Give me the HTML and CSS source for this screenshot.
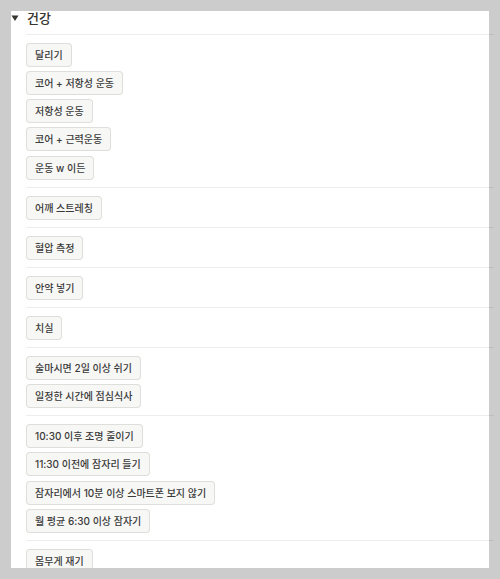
FILE: index.html
```html
<!DOCTYPE html>
<html lang="ko">
<head>
  <meta charset="utf-8">
  <title>건강</title>
  <link rel="stylesheet" href="styles.css">
</head>
<body>
  <div class="panel">
    <div class="toggle-head">
      <span class="toggle-icon">
        <svg width="8" height="8" viewBox="0 0 8 8"><polygon points="0.5,1.5 7.5,1.5 4,7" fill="#37352f"/></svg>
      </span>
      <span class="toggle-title">건강</span>
    </div>

    <div class="groups">
      <div class="group">
        <button class="habit">달리기</button>
        <button class="habit">코어 + 저항성 운동</button>
        <button class="habit">저항성 운동</button>
        <button class="habit">코어 + 근력운동</button>
        <button class="habit">운동 w 이든</button>
      </div>
      <div class="group">
        <button class="habit">어깨 스트레칭</button>
      </div>
      <div class="group">
        <button class="habit">혈압 측정</button>
      </div>
      <div class="group">
        <button class="habit">안약 넣기</button>
      </div>
      <div class="group">
        <button class="habit">치실</button>
      </div>
      <div class="group">
        <button class="habit">술마시면 2일 이상 쉬기</button>
        <button class="habit">일정한 시간에 점심식사</button>
      </div>
      <div class="group">
        <button class="habit">10:30 이후 조명 줄이기</button>
        <button class="habit">11:30 이전에 잠자리 들기</button>
        <button class="habit">잠자리에서 10분 이상 스마트폰 보지 않기</button>
        <button class="habit">월 평균 6:30 이상 잠자기</button>
      </div>
      <div class="group">
        <button class="habit">몸무게 재기</button>
      </div>
    </div>
  </div>
</body>
</html>
```

FILE: styles.css
```css
body {
  margin: 0;
  background-color: #cccccc;
  font-family: "Inter", "Noto Sans CJK KR", sans-serif;
  color: #37352f;
}

.panel {
  margin: 11px 0 0 11px;
  width: 478px;
  height: 557px;
  background-color: #ffffff;
}

.toggle-head {
  display: flex;
  align-items: flex-start;
  height: 23px;
}

.toggle-icon {
  width: 16px;
  display: flex;
  padding-top: 3px;
}

.toggle-title {
  font-size: 13px;
  font-weight: 500;
  line-height: 14px;
}

.groups {
  margin-left: 15px;
  margin-right: -5px;
}

.group {
  display: flex;
  flex-direction: column;
  align-items: flex-start;
  gap: 4.3px;
  padding: 7.5px 0;
  border-top: 1px solid rgba(55, 53, 47, 0.09);
}

.habit {
  height: 24px;
  box-sizing: border-box;
  padding: 0 8px;
  border: 1px solid rgba(55, 53, 47, 0.13);
  border-radius: 4px;
  background-color: #f7f7f5;
  font-family: inherit;
  font-size: 10px;
  font-weight: 500;
  color: #3a3a3a;
  line-height: 22px;
  white-space: nowrap;
}
```
